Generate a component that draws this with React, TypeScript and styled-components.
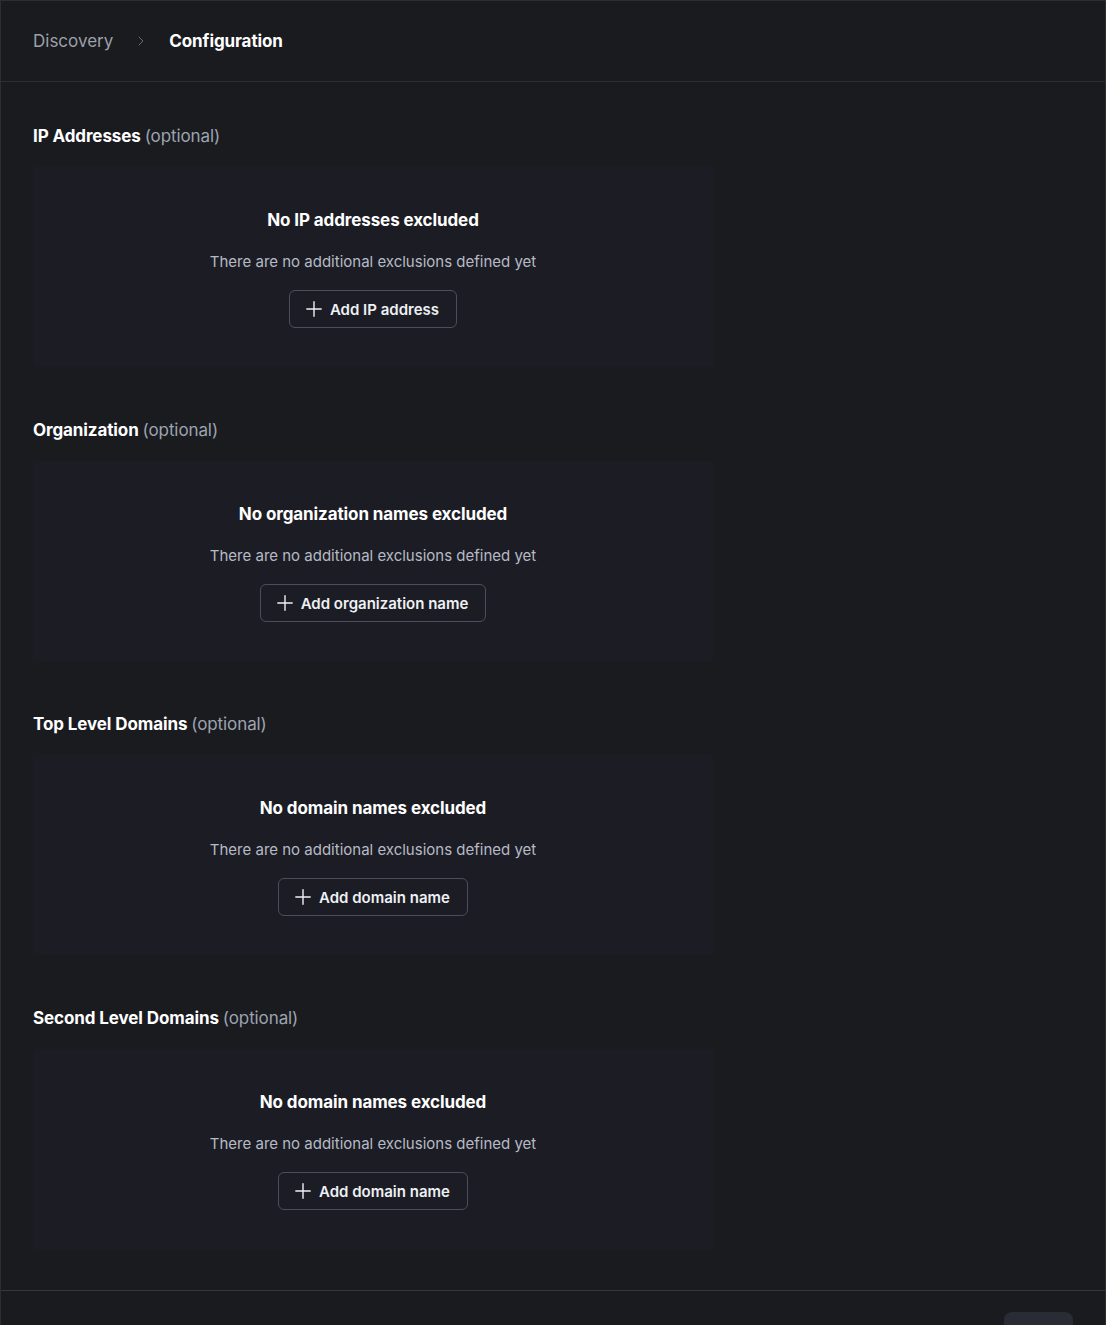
import React from "react";
import styled, { createGlobalStyle } from "styled-components";
import { ChevronRight, ArrowLeft } from "lucide-react";

const Global = createGlobalStyle`
  html, body {
    margin: 0;
    padding: 0;
    background: #1a1b1f;
    font-family: Inter, "Noto Sans", sans-serif;
    -webkit-font-smoothing: antialiased;
  }
  * { box-sizing: border-box; }
`;

const Frame = styled.div`
  border: 1px solid #2d2e34;
  border-bottom: none;
  background: #1a1b1f;
  min-height: 1325px;
  color: #ffffff;
`;

const Header = styled.header`
  height: 81px;
  display: flex;
  align-items: center;
  gap: 20px;
  padding: 0 32px;
  border-bottom: 1px solid #2d2e34;
`;

const Crumb = styled.span<{ $active?: boolean }>`
  font-size: 17px;
  font-weight: ${(p) => (p.$active ? 700 : 400)};
  color: ${(p) => (p.$active ? "#ffffff" : "#9ca0aa")};
  letter-spacing: ${(p) => (p.$active ? "-0.1px" : "0")};
`;

const Sep = styled.span`
  display: flex;
  color: #7a7d87;
`;

const Main = styled.main`
  padding: 41px 32px 41px;
  display: flex;
  flex-direction: column;
  gap: 50px;
`;

const Section = styled.section`
  display: flex;
  flex-direction: column;
  gap: 19px;
`;

const SectionTitle = styled.h2`
  margin: 0;
  padding-top: 1px;
  font-size: 17px;
  line-height: 24px;
  font-weight: 700;
  color: #ffffff;
  letter-spacing: -0.1px;
`;

const Optional = styled.span`
  font-weight: 400;
  color: #9ea3b0;
`;

const Card = styled.div`
  width: 680px;
  background: #1c1d24;
  padding: 41px 24px 39px;
  display: flex;
  flex-direction: column;
  align-items: center;
`;

const EmptyTitle = styled.div`
  font-size: 17px;
  line-height: 24px;
  font-weight: 700;
  color: #ffffff;
  letter-spacing: -0.1px;
`;

const EmptyText = styled.div`
  margin-top: 18px;
  font-size: 15px;
  line-height: 24px;
  color: #b6bac6;
`;

const OutlineButton = styled.button`
  margin-top: 16px;
  height: 38px;
  padding: 0 17px 0 16px;
  display: flex;
  align-items: center;
  gap: 8px;
  background: transparent;
  border: 1px solid #4b4d59;
  border-radius: 6px;
  color: #eef0f5;
  font-family: inherit;
  font-size: 15px;
  font-weight: 600;
  cursor: pointer;
`;

const Footer = styled.footer`
  border-top: 1px solid #34353f;
  padding: 21px 32px;
  display: flex;
  align-items: center;
  justify-content: space-between;
`;

const BackLink = styled.span`
  display: flex;
  align-items: center;
  gap: 4px;
  font-size: 15px;
  color: #9ca0aa;
`;

const NextButton = styled.button`
  width: 69px;
  height: 38px;
  border: none;
  border-radius: 8px;
  background: #2a2c35;
  color: #6b6e78;
  font-family: inherit;
  font-size: 15px;
  font-weight: 600;
`;

const PlusIcon = () => (
  <svg width="16" height="16" viewBox="0 0 16 16" fill="none" stroke="currentColor" strokeWidth="1.4" strokeLinecap="round">
    <path d="M8 0.8v14.4M0.8 8h14.4" />
  </svg>
);

const sections = [
  { title: "IP Addresses", empty: "No IP addresses excluded", action: "Add IP address" },
  { title: "Organization", empty: "No organization names excluded", action: "Add organization name" },
  { title: "Top Level Domains", empty: "No domain names excluded", action: "Add domain name" },
  { title: "Second Level Domains", empty: "No domain names excluded", action: "Add domain name" },
];

export default function App() {
  return (
    <>
      <Global />
      <Frame>
        <Header>
          <Crumb>Discovery</Crumb>
          <Sep>
            <ChevronRight size={16} strokeWidth={1.25} />
          </Sep>
          <Crumb $active>Configuration</Crumb>
        </Header>
        <Main>
          {sections.map((s) => (
            <Section key={s.title}>
              <SectionTitle>
                {s.title} <Optional>(optional)</Optional>
              </SectionTitle>
              <Card>
                <EmptyTitle>{s.empty}</EmptyTitle>
                <EmptyText>There are no additional exclusions defined yet</EmptyText>
                <OutlineButton>
                  <PlusIcon />
                  {s.action}
                </OutlineButton>
              </Card>
            </Section>
          ))}
        </Main>
        <Footer>
          <BackLink>
            <ArrowLeft size={16} strokeWidth={1.5} />
            Back
          </BackLink>
          <NextButton>Next</NextButton>
        </Footer>
      </Frame>
    </>
  );
}
